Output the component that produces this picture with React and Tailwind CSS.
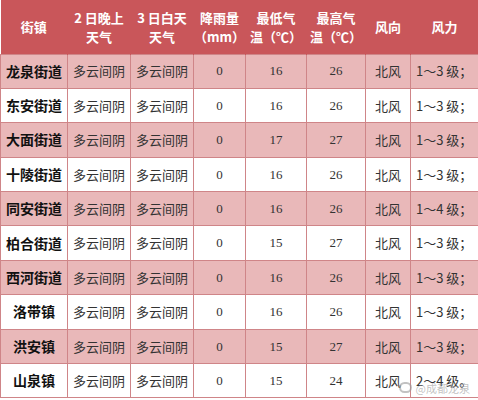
const rows = [
  ["龙泉街道", "16", "26", "1～3 级；"],
  ["东安街道", "16", "26", "1～3 级；"],
  ["大面街道", "17", "27", "1～3 级；"],
  ["十陵街道", "16", "26", "1～3 级；"],
  ["同安街道", "16", "26", "1～4 级；"],
  ["柏合街道", "15", "27", "1～3 级；"],
  ["西河街道", "16", "26", "1～3 级；"],
  ["洛带镇", "16", "26", "1～3 级；"],
  ["洪安镇", "15", "27", "1～3 级；"],
  ["山泉镇", "15", "24", "2～4 级。"],
];

const widths = ["w-[67px]", "w-[63px]", "w-[63px]", "w-[52px]", "w-[61px]", "w-[59px]", "w-[45px]", "w-[68px]"];

const head = [
  ["街镇"],
  ["2 日晚上", "天气"],
  ["3 日白天", "天气"],
  ["降雨量", "（mm）"],
  ["最低气", "温（℃）"],
  ["最高气", "温（℃）"],
  ["风向"],
  ["风力"],
];

const App = () => {
  return (
    <div className="relative w-[478px] h-[400px] bg-white overflow-hidden font-['Noto_Sans_CJK_SC',sans-serif]">
      <table className="w-[478px] table-fixed border-collapse">
        <thead>
          <tr className="h-[54px] bg-[#c9565a]">
            {head.map((h, i) => (
              <th key={i} className={`${widths[i]} border-r border-[#c9565a] text-white text-[13px] font-bold leading-[19px] text-center`}>
                {h.map((t, j) => (
                  <div key={j}>{t}</div>
                ))}
              </th>
            ))}
          </tr>
        </thead>
        <tbody>
          {rows.map((r, i) => (
            <tr key={i} className={`h-[34.4px] ${i % 2 === 0 ? "bg-[#e9b8b9]" : "bg-white"}`}>
              <td className="border border-[#cf8588] text-center text-[14px] font-bold text-[#111]">{r[0]}</td>
              <td className="border border-[#cf8588] text-center text-[13px] text-[#333]">多云间阴</td>
              <td className="border border-[#cf8588] text-center text-[13px] text-[#333]">多云间阴</td>
              <td className="border border-[#cf8588] text-center text-[13px] text-[#333] font-['Liberation_Serif',serif]">0</td>
              <td className="border border-[#cf8588] text-center text-[13px] text-[#333] font-['Liberation_Serif',serif]">{r[1]}</td>
              <td className="border border-[#cf8588] text-center text-[13px] text-[#333] font-['Liberation_Serif',serif]">{r[2]}</td>
              <td className="border border-[#cf8588] text-center text-[13px] text-[#333]">北风</td>
              <td className="border border-[#cf8588] pl-[5px] text-left text-[13px] text-[#333] whitespace-nowrap overflow-hidden">{r[3]}</td>
            </tr>
          ))}
        </tbody>
      </table>
      <div className="absolute right-[8px] bottom-[4px] flex items-center gap-1 text-[11px] text-[#9a9a9a]/60">
        <span className="w-[13px] h-[11px] rounded-full border-2 border-[#9a9a9a]/60" />
        <span>@成都龙泉</span>
      </div>
    </div>
  );
};

export default App;
